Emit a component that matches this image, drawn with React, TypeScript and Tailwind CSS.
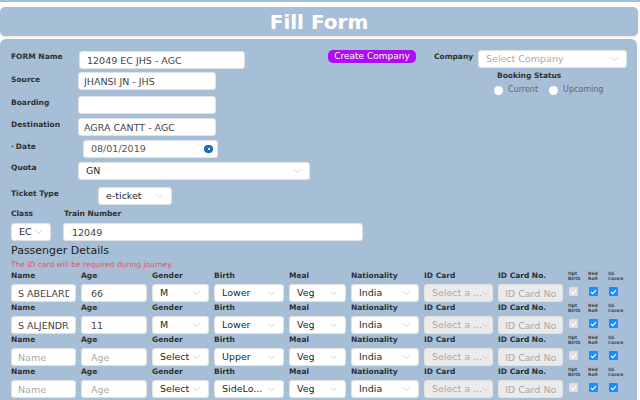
import React from "react";

// 選択ボックスの矢印
function Chevron() {
  return (
    <svg width="7" height="4" viewBox="0 0 7 4" fill="none" className="shrink-0">
      <polyline points="0.5,0.5 3.5,3.5 6.5,0.5" stroke="#c4c4c4" strokeWidth="0.8" />
    </svg>
  );
}

function Label({ className = "", children }: { className?: string; children: React.ReactNode }) {
  return (
    <div className={`shrink-0 text-[7.5px] font-bold leading-[10px] text-[#2f2f2f] ${className}`}>
      {children}
    </div>
  );
}

function TextInput({
  className = "",
  value,
  placeholder,
  disabled,
}: {
  className?: string;
  value?: string;
  placeholder?: string;
  disabled?: boolean;
}) {
  return (
    <input
      readOnly
      defaultValue={value}
      placeholder={placeholder}
      className={`h-[18px] shrink-0 rounded-[3px] border border-[#e2e2e2] text-[9.5px] text-[#444] outline-none placeholder:text-[#a9a9a9] ${
        disabled ? "bg-[#ebebeb]" : "bg-white"
      } ${className}`}
    />
  );
}

function Select({
  className = "",
  value,
  placeholder,
  disabled,
}: {
  className?: string;
  value?: string;
  placeholder?: string;
  disabled?: boolean;
}) {
  return (
    <div
      className={`flex h-[18px] shrink-0 items-center justify-between rounded-[3px] border border-[#e2e2e2] pl-[7px] text-[9.5px] ${
        disabled ? "bg-[#ebebeb] pr-[4px]" : "bg-white pr-[8px]"
      } ${className}`}
    >
      {value ? (
        <span className="whitespace-nowrap text-[#262626]">{value}</span>
      ) : (
        <span className="whitespace-nowrap text-[#acacac]">{placeholder}</span>
      )}
      <Chevron />
    </div>
  );
}

function Check({ on, disabled }: { on?: boolean; disabled?: boolean }) {
  return (
    <div
      className={`ml-[1px] flex h-[9px] w-[9px] items-center justify-center rounded-[1px] ${
        disabled ? "bg-[#dedede]" : "bg-[#1a8cff]"
      }`}
    >
      {on && (
        <svg width="7" height="6" viewBox="0 0 7 6" fill="none">
          <polyline points="1,3 2.8,4.6 6,1.2" stroke="white" strokeWidth="1.2" />
        </svg>
      )}
    </div>
  );
}

type Passenger = {
  name?: string;
  age?: string;
  gender: string;
  birth: string;
};

const passengers: Passenger[] = [
  { name: "S ABELARDO", age: "66", gender: "M", birth: "Lower" },
  { name: "S ALJENDRO", age: "11", gender: "M", birth: "Lower" },
  { gender: "Select", birth: "Upper" },
  { gender: "Select", birth: "SideLo..." },
];

function PassengerRow({ p }: { p: Passenger }) {
  const cell = "flex flex-col";
  const lbl = "h-[11px] text-[7.5px] font-bold leading-[11px] text-[#2f2f2f] whitespace-nowrap";
  const ctl = "mt-[3px]";
  const tiny = "h-[14px] pt-[1px] text-[4.5px] font-bold leading-[5px] text-[#444]";
  return (
    <div className="grid grid-cols-[65px_66px_57px_70px_57px_68px_69px_65px_15px_15px_15px] gap-x-[5px]">
      <div className={cell}>
        <div className={lbl}>Name</div>
        <TextInput className={`${ctl} w-full px-[6px]`} value={p.name} placeholder="Name" />
      </div>
      <div className={cell}>
        <div className={lbl}>Age</div>
        <TextInput className={`${ctl} w-full px-[9px]`} value={p.age} placeholder="Age" />
      </div>
      <div className={cell}>
        <div className={lbl}>Gender</div>
        <Select className={`${ctl} w-full`} value={p.gender} />
      </div>
      <div className={cell}>
        <div className={lbl}>Birth</div>
        <Select className={`${ctl} w-full`} value={p.birth} />
      </div>
      <div className={cell}>
        <div className={lbl}>Meal</div>
        <Select className={`${ctl} w-full`} value="Veg" />
      </div>
      <div className={cell}>
        <div className={lbl}>Nationality</div>
        <Select className={`${ctl} w-full`} value="India" />
      </div>
      <div className={cell}>
        <div className={lbl}>ID Card</div>
        <Select className={`${ctl} w-full`} placeholder="Select a ..." disabled />
      </div>
      <div className={cell}>
        <div className={lbl}>ID Card No.</div>
        <TextInput className={`${ctl} w-full pl-[6px] pr-[1px]`} placeholder="ID Card No" disabled />
      </div>
      <div className={cell}>
        <div className={tiny}>
          Opt
          <br />
          Birth
        </div>
        <div className="mt-[3px]">
          <Check on disabled />
        </div>
      </div>
      <div className={cell}>
        <div className={tiny}>
          Red
          <br />
          Roll
        </div>
        <div className="mt-[3px]">
          <Check on />
        </div>
      </div>
      <div className={cell}>
        <div className={tiny}>
          SS
          <br />
          Conce
        </div>
        <div className="mt-[3px]">
          <Check on />
        </div>
      </div>
    </div>
  );
}

export default function App() {
  return (
    <div className="h-[400px] w-[640px] overflow-hidden bg-white font-['DejaVu_Sans',sans-serif]">
      <div className="h-[2px] w-full bg-[#a6bfd6]" />

      {/* ヘッダー */}
      <div className="mt-[5px] flex h-[29px] w-[638px] items-center justify-center rounded-[5px] bg-[#a6bfd6] shadow-[0_1px_2px_rgba(0,0,0,0.12)]">
        <h1 className="text-[20px] font-bold text-white">Fill Form</h1>
      </div>

      {/* フォーム本体 */}
      <div className="mt-[3px] w-[637px] rounded-[6px] bg-[#a6bfd6] pb-[20px] pl-[11px] pt-[12px]">
        <div className="flex items-start">
          <Label className="w-[68px] pt-[1px]">FORM Name</Label>
          <TextInput className="w-[166px] px-[7px]" value="12049 EC JHS - AGC" />
          <button className="ml-[83px] mt-[-1px] h-[13px] w-[88px] shrink-0 rounded-[5px] bg-[#ad0cf5] text-[9px] leading-[13px] text-white">
            Create Company
          </button>
          <Label className="ml-[18px] w-[44px] pt-[1px]">Company</Label>
          <Select className="mt-[-1px] w-[149px]" placeholder="Select Company" />
        </div>

        <div className="mt-[3px] flex items-start">
          <div className="flex flex-col">
            <div className="flex items-start">
              <Label className="w-[67px] pt-[3px]">Source</Label>
              <TextInput className="w-[138px] px-[5px]" value="JHANSI JN - JHS" />
            </div>
            <div className="mt-[6px] flex items-start">
              <Label className="w-[67px] pt-[2px]">Boarding</Label>
              <TextInput className="w-[138px] px-[5px]" />
            </div>
            <div className="mt-[4px] flex items-start">
              <Label className="w-[67px] pt-[2px]">Destination</Label>
              <TextInput className="w-[138px] px-[5px]" value="AGRA CANTT - AGC" />
            </div>
          </div>

          <div className="ml-[278px] mt-[-1px] flex flex-col">
            <div className="pl-[3px] text-[7.5px] font-bold leading-[10px] text-[#2f2f2f]">
              Booking Status
            </div>
            <div className="mt-[4px] flex h-[10px] items-center text-[8px] text-[#666]">
              <span className="h-[9px] w-[9px] rounded-full bg-white" />
              <span className="ml-[5px]">Current</span>
              <span className="ml-[11px] h-[9px] w-[9px] rounded-full bg-white" />
              <span className="ml-[5px]">Upcoming</span>
            </div>
          </div>
        </div>

        <div className="mt-[4px] flex items-start">
          <Label className="w-[72px] pt-[2px]">
            <span className="mr-[2px]">·</span>Date
          </Label>
          <div className="flex h-[18px] w-[135px] items-center justify-between rounded-[3px] border border-[#e2e2e2] bg-white pl-[7px] pr-[4px] text-[9.5px] text-[#555]">
            <span>08/01/2019</span>
            <span className="flex h-[8px] w-[9px] items-center justify-center rounded-full bg-[#1b68b3]">
              <svg width="4" height="4" viewBox="0 0 4 4">
                <path d="M0.8 0.8 L3.2 3.2 M3.2 0.8 L0.8 3.2" stroke="white" strokeWidth="0.9" />
              </svg>
            </span>
          </div>
        </div>

        <div className="mt-[4px] flex items-start">
          <Label className="w-[67px] pt-[1px]">Quota</Label>
          <Select className="w-[232px]" value="GN" />
        </div>

        <div className="mt-[7px] flex items-start">
          <Label className="w-[87px] pt-[2px]">Ticket Type</Label>
          <Select className="w-[74px] pl-[6px]" value="e-ticket" />
        </div>

        <div className="mt-[4px] flex">
          <Label className="w-[53px]">Class</Label>
          <Label>Train Number</Label>
        </div>
        <div className="mt-[4px] flex">
          <Select className="w-[40px]" value="EC" />
          <TextInput className="ml-[12px] w-[300px] px-[8px]" value="12049" />
        </div>

        <div className="mt-[3px] text-[11px] leading-[14px] text-[#222]">Passenger Details</div>
        <div className="mt-[2px] text-[7.5px] leading-[10px] text-[#e5506c]">
          The ID card will be required during journey.
        </div>

        <div className="flex flex-col">
          {passengers.map((p, i) => (
            <PassengerRow key={i} p={p} />
          ))}
        </div>
      </div>
    </div>
  );
}
